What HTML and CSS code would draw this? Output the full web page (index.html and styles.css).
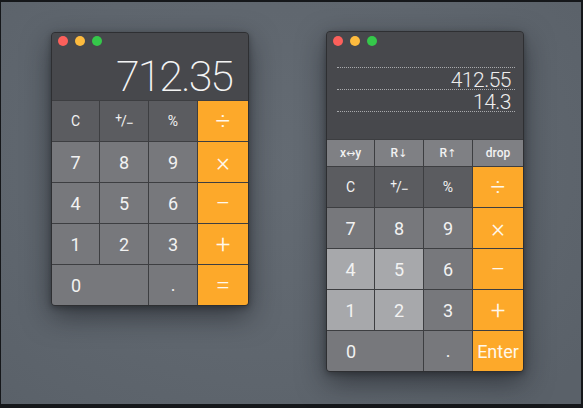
FILE: index.html
```html
<!DOCTYPE html>
<html>
<head>
<meta charset="utf-8">
<link rel="stylesheet" href="styles.css">
</head>
<body>
<div class="desktop">
  <div class="window calc-basic">
    <div class="screen">
      <div class="lights"><span class="light red"></span><span class="light yellow"></span><span class="light green"></span></div>
      <div class="readout">712.35</div>
    </div>
    <div class="keys">
      <div class="key fn small">C</div>
      <div class="key fn small"><span class="pm"><span class="pm-plus">+</span>/<span class="pm-minus">−</span></span></div>
      <div class="key fn small">%</div>
      <div class="key op">÷</div>
      <div class="key num">7</div>
      <div class="key num">8</div>
      <div class="key num">9</div>
      <div class="key op">×</div>
      <div class="key num">4</div>
      <div class="key num">5</div>
      <div class="key num">6</div>
      <div class="key op">−</div>
      <div class="key num">1</div>
      <div class="key num">2</div>
      <div class="key num">3</div>
      <div class="key op">+</div>
      <div class="key num zero">0</div>
      <div class="key num dot">.</div>
      <div class="key op">=</div>
    </div>
  </div>

  <div class="window calc-rpn">
    <div class="screen">
      <div class="lights"><span class="light red"></span><span class="light yellow"></span><span class="light green"></span></div>
      <div class="stack">
        <div class="stack-row">412.55</div>
        <div class="stack-row">14.3</div>
      </div>
    </div>
    <div class="keys">
      <div class="key stackop">x<span class="arrow">↔</span>y</div>
      <div class="key stackop">R<span class="arrow">↓</span></div>
      <div class="key stackop">R<span class="arrow">↑</span></div>
      <div class="key stackop">drop</div>
      <div class="key fn small">C</div>
      <div class="key fn small"><span class="pm"><span class="pm-plus">+</span>/<span class="pm-minus">−</span></span></div>
      <div class="key fn small">%</div>
      <div class="key op">÷</div>
      <div class="key num">7</div>
      <div class="key num">8</div>
      <div class="key num">9</div>
      <div class="key op">×</div>
      <div class="key light-key">4</div>
      <div class="key light-key">5</div>
      <div class="key num">6</div>
      <div class="key op">−</div>
      <div class="key light-key">1</div>
      <div class="key light-key">2</div>
      <div class="key num">3</div>
      <div class="key op">+</div>
      <div class="key num zero">0</div>
      <div class="key num dot">.</div>
      <div class="key op enter">Enter</div>
    </div>
  </div>
</div>
</body>
</html>
```

FILE: styles.css
```css
html, body {
  margin: 0;
  padding: 0;
  background: #15171a;
}

body {
  width: 583px;
  height: 408px;
  overflow: hidden;
  font-family: Roboto, "Liberation Sans", sans-serif;
}

.desktop {
  position: relative;
  margin: 2px 2px 0 1px;
  height: 402px;
  background: radial-gradient(ellipse 70% 80% at 45% 40%, #646b73 0%, #5f666e 60%, #5a6169 100%);
}

.window {
  position: absolute;
  width: 198px;
  box-sizing: border-box;
  border: 1px solid #2e2f32;
  border-radius: 4px;
  overflow: hidden;
  background: #3e3f42;
  box-shadow: 0 10px 28px rgba(18, 20, 26, 0.55), 0 2px 6px rgba(0, 0, 0, 0.3);
}

.calc-basic {
  left: 50px;
  top: 30px;
}

.calc-rpn {
  left: 325px;
  top: 29px;
}

.screen {
  background: #47484c;
  box-sizing: border-box;
}

.calc-basic .screen {
  height: 67px;
  padding: 3px 15px 0 6px;
}

.calc-rpn .screen {
  height: 107px;
  padding: 4px 8px 0 6px;
}

.lights {
  display: flex;
  gap: 7px;
}

.light {
  width: 10px;
  height: 10px;
  border-radius: 50%;
}

.red { background: #fc605b; }
.yellow { background: #fdbb3e; }
.green { background: #35c84a; }

.readout {
  margin-top: 9px;
  text-align: right;
  color: #f4f4f4;
  font-size: 43px;
  line-height: 43px;
  font-weight: 200;
  letter-spacing: -2px;
  padding-right: 1px;
}

.stack {
  margin: 21px 0 0 4px;
  border-top: 1px dotted #a9aaad;
}

.stack-row {
  height: 22px;
  box-sizing: border-box;
  border-bottom: 1px dotted #a9aaad;
  text-align: right;
  padding-right: 4px;
  color: #eeeeee;
  font-size: 21px;
  font-weight: 300;
  line-height: 24px;
  letter-spacing: -0.5px;
}

.keys {
  display: grid;
  grid-template-columns: 47px 48px 48px 1fr;
  gap: 1px;
  background: #3d3e41;
  border-top: 1px solid #3d3e41;
}

.calc-basic .keys {
  grid-template-rows: repeat(5, 40px);
}

.calc-rpn .keys {
  grid-template-rows: 26px repeat(5, 40px);
}

.key {
  display: flex;
  align-items: center;
  justify-content: center;
  color: #f2f2f2;
  font-size: 18px;
  font-weight: 400;
}

.fn {
  background: #5b5c60;
}

.small {
  font-size: 14px;
}

.pm {
  display: inline-block;
  font-size: 14px;
  letter-spacing: -1px;
}

.pm-plus {
  font-size: 12px;
  vertical-align: 4px;
}

.pm-minus {
  font-size: 14px;
  vertical-align: -2px;
}

.num {
  background: #77787c;
}

.light-key {
  background: #a7a8ab;
}

.op {
  background: #fda92a;
  color: #fff8ec;
  font-size: 26px;
  font-weight: 300;
}

.enter {
  font-size: 18px;
  font-weight: 400;
}

.stackop {
  background: #7f8084;
  font-size: 12px;
  font-weight: 500;
}

.arrow {
  font-family: "DejaVu Sans", sans-serif;
  font-size: 11px;
  font-weight: 400;
}

.zero {
  grid-column: span 2;
  justify-content: flex-start;
  padding-left: 19px;
}

.dot {
  align-items: flex-end;
  padding-bottom: 10px;
  box-sizing: border-box;
}
```
